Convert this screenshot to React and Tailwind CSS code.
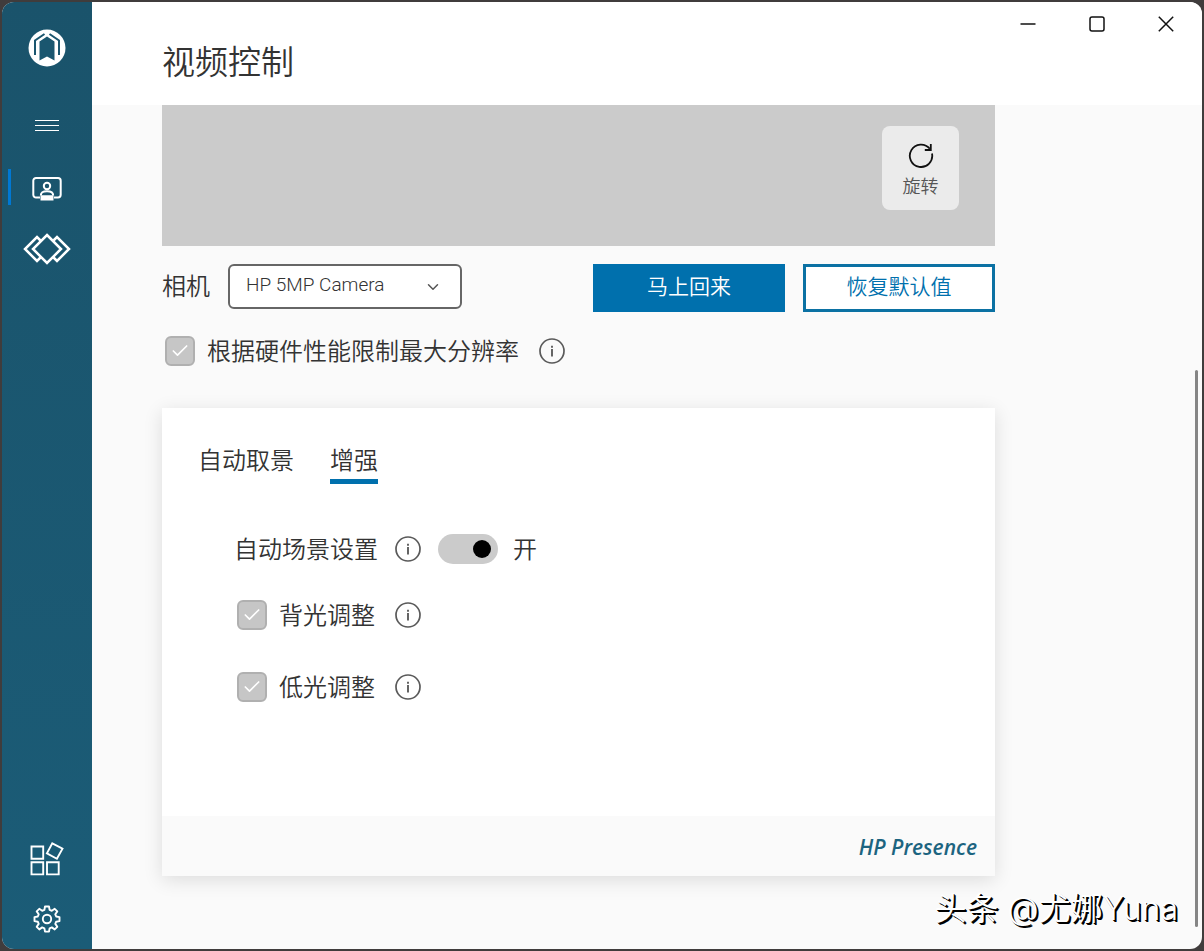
import { useState } from "react";
import { FiCheck, FiChevronDown } from "react-icons/fi";

function LogoIcon() {
  return (
    <svg width="38" height="38" viewBox="0 0 38 38" fill="none">
      <circle cx="19" cy="19" r="18.5" fill="#fff" />
      <path d="M11.500 31.500V12.500L19 7.500l7.500 5v19L19 27.500z" fill="#1a566f" />
      <path d="M16.500 5 7 11.500V26M21.500 5 31 11.500V26" stroke="#1a566f" strokeWidth="2" />
    </svg>
  );
}

function MenuIcon() {
  return (
    <svg width="24" height="12" viewBox="0 0 24 12" stroke="#fff">
      <path d="M0 .5h24M0 5.5h24M0 10.5h24" />
    </svg>
  );
}

function VideoIcon() {
  return (
    <svg width="30" height="24" viewBox="0 0 30 24" fill="none" stroke="#fff" strokeWidth="2">
      <path d="M8 20.500H4A2.700 2.700 0 0 1 1.300 17.800V3.700A2.700 2.700 0 0 1 4 1h22a2.700 2.700 0 0 1 2.700 2.700v14.100a2.700 2.700 0 0 1-2.700 2.700h-4" />
      <circle cx="15" cy="9" r="3.200" />
      <path d="M8.800 18.500c0-3 2-4.300 6.200-4.300s6.200 1.300 6.200 4.300" />
      <path d="M8.500 18.200h13v5.300h-13z" fill="#fff" stroke="none" />
    </svg>
  );
}

function DiamondsIcon() {
  return (
    <svg width="48" height="32" viewBox="0 0 48 32" fill="none" stroke="#fff" strokeWidth="2.500">
      <path d="M24 2 38 16 24 30 10 16z" />
      <path d="m18 8-4-4L2 16l12 12 4-4M30 8l4-4 12 12-12 12-4-4" />
    </svg>
  );
}

function AppsIcon() {
  return (
    <svg width="34" height="34" viewBox="0 0 34 34" fill="none" stroke="#fff" strokeWidth="1.900">
      <path d="M1.500 4.500h11.700v12.200H1.500zM1.500 20.200h11.700v12.200H1.500zM17 20.200h11.700v12.200H17z" />
      <path d="m22.300 1.300 10.200 5.400-5.600 10.100-10-5.400z" />
    </svg>
  );
}

function GearIcon() {
  return (
    <svg width="28" height="28" viewBox="0 0 28 28" fill="none" stroke="#fff" strokeWidth="1.900" strokeLinejoin="round">
      <path d="M12 1.500h4l.6 3.400 2.200.9 2.900-2 2.600 2.600-2 2.900.9 2.200 3.300.6v4l-3.300.6-.9 2.200 2 2.900-2.600 2.600-2.900-2-2.200.9-.6 3.300h-4l-.6-3.300-2.200-.9-2.900 2-2.600-2.600 2-2.900-.9-2.200-3.300-.6v-4l3.300-.6.9-2.200-2-2.900 2.600-2.600 2.900 2 2.200-.9z" />
      <circle cx="14" cy="14" r="4.200" />
    </svg>
  );
}

function RotateIcon() {
  return (
    <svg width="26" height="26" viewBox="0 0 26 26" fill="none" stroke="#111" strokeWidth="1.800">
      <path d="M24 10.500A11.200 11.200 0 1 1 21.800 5.800" />
      <path d="M22.800 1v6h-6" />
    </svg>
  );
}

function InfoButton({ label }) {
  return (
    <button type="button" aria-label={label} className="shrink-0">
      <svg width="26" height="26" viewBox="0 0 26 26" fill="none">
        <circle cx="13" cy="13" r="12" stroke="#5a5a5a" strokeWidth="1.700" />
        <path d="M13 11v7.500M13 7.800v1.900" stroke="#4a4a4a" strokeWidth="1.700" />
      </svg>
    </button>
  );
}

function Checkbox({ id, label }) {
  const [checked, setChecked] = useState(true);
  return (
    <div className="flex items-center gap-3 text-2xl leading-7">
      <span className="grid size-[30px] place-items-center">
        <input
          type="checkbox"
          id={id}
          checked={checked}
          onChange={(e) => setChecked(e.target.checked)}
          className="col-start-1 row-start-1 size-[30px] appearance-none rounded-md border-2 border-[#b0b0b0] bg-[#c6c6c6]"
        />
        {checked && <FiCheck className="pointer-events-none col-start-1 row-start-1 size-5 text-white" />}
      </span>
      <label htmlFor={id} className="pb-0.5">
        {label}
      </label>
    </div>
  );
}

function Sidebar() {
  const item = "flex h-[60px] w-full items-center justify-center";
  return (
    <nav className="flex w-[90px] shrink-0 flex-col bg-linear-to-b from-[#1a536b] to-[#1b5c77]">
      <div className="flex h-[92px] items-center justify-center">
        <LogoIcon />
      </div>
      <button type="button" aria-label="菜单" className="mb-px flex h-16 w-full items-center justify-center">
        <MenuIcon />
      </button>
      <button type="button" aria-label="视频控制" className={`${item} relative`}>
        <span className="absolute top-2.5 left-1.5 h-9 w-[3px] bg-[#0078d4]" />
        <VideoIcon />
      </button>
      <button type="button" aria-label="Presence" className={item}>
        <DiamondsIcon />
      </button>
      <button type="button" aria-label="应用" className={`${item} mt-auto`}>
        <AppsIcon />
      </button>
      <button type="button" aria-label="设置" className={item}>
        <GearIcon />
      </button>
    </nav>
  );
}

function WindowControls() {
  const button = "flex h-11 w-[69px] items-center justify-center";
  return (
    <div className="flex pr-0.5">
      <button type="button" aria-label="最小化" className={button}>
        <svg width="16" height="16" stroke="#111" strokeWidth="1.500">
          <path d="M.5 8h15" />
        </svg>
      </button>
      <button type="button" aria-label="最大化" className={button}>
        <svg width="16" height="16" fill="none" stroke="#111" strokeWidth="1.500">
          <rect x="1" y="1" width="14" height="14" rx="2" />
        </svg>
      </button>
      <button type="button" aria-label="关闭" className={button}>
        <svg width="16" height="16" stroke="#111" strokeWidth="1.500">
          <path d="m.8.8 14.400 14.400M15.200.8.8 15.200" />
        </svg>
      </button>
    </div>
  );
}

export default function App() {
  const [tab, setTab] = useState("enhance");
  const [auto, setAuto] = useState(true);
  const tabs = [
    ["framing", "自动取景"],
    ["enhance", "增强"],
  ];

  return (
    <div className="flex min-h-screen bg-[#403c3c] p-0.5 font-['Noto_Sans_CJK_SC',sans-serif] font-[350] text-[#333]">
      <div className="relative flex flex-1 overflow-hidden rounded-xl bg-[#fafafa]">
        <Sidebar />
        <div className="flex min-w-0 flex-1 flex-col">
          <header className="flex h-[103px] justify-between bg-white pl-[70px]">
            <h1 className="self-center pt-3 text-[33px] leading-10 font-[350]">视频控制</h1>
            <WindowControls />
          </header>

          <main className="pr-[207px] pb-[73px] pl-[70px]">
            <div className="flex h-[141px] items-start justify-end bg-[#cbcbcb] px-9 py-[21px]">
              <button type="button" className="flex h-[84px] w-[77px] flex-col items-center justify-center gap-1 rounded-lg bg-[#ebebeb] pt-1 text-lg leading-6 text-[#555]">
                <RotateIcon />
                旋转
              </button>
            </div>

            <div className="mt-[18px] flex items-start gap-[18px]">
              <label htmlFor="camera" className="text-2xl leading-[42px]">
                相机
              </label>
              <div className="relative">
                <select id="camera" className="h-[45px] w-[234px] appearance-none rounded-md border-2 border-[#666] bg-white px-4 pb-0.5 font-['Roboto',sans-serif] text-[19px] font-light text-[#333]">
                  <option>HP 5MP Camera</option>
                </select>
                <FiChevronDown className="pointer-events-none absolute top-[14px] right-5 size-[18px] text-[#555]" />
              </div>
              <button type="button" className="ml-auto h-12 w-48 bg-[#0070ad] pb-1 text-[21px] text-white">
                马上回来
              </button>
              <button type="button" className="h-12 w-48 border-3 border-[#0b71a3] bg-white pb-1 text-[21px] text-[#0070ad]">
                恢复默认值
              </button>
            </div>

            <div className="mt-6 flex items-center gap-5 pl-[3px]">
              <Checkbox id="limit" label="根据硬件性能限制最大分辨率" />
              <InfoButton label="分辨率说明" />
            </div>

            <section className="mt-[42px] bg-white shadow-[0_4px_18px_rgba(0,0,0,0.12)]">
              <div className="h-[408px] px-9 pt-8">
                <div role="tablist" className="flex gap-9">
                  {tabs.map(([key, name]) => (
                    <button
                      key={key}
                      type="button"
                      role="tab"
                      aria-selected={tab === key}
                      onClick={() => setTab(key)}
                      className={`h-11 border-b-5 pb-0.5 text-2xl ${tab === key ? "border-[#0070ad]" : "border-transparent"}`}
                    >
                      {name}
                    </button>
                  ))}
                </div>

                <div className="mt-[50px] flex items-center pl-9 text-2xl leading-7">
                  <label htmlFor="auto-scene" className="mr-[17px] pb-0.5">
                    自动场景设置
                  </label>
                  <InfoButton label="自动场景说明" />
                  <input
                    type="checkbox"
                    role="switch"
                    id="auto-scene"
                    checked={auto}
                    onChange={(e) => setAuto(e.target.checked)}
                    className="mr-[15px] ml-[17px] flex h-[30px] w-[60px] appearance-none items-center rounded-full bg-[#cbcbcb] px-[7px] before:size-[18px] before:rounded-full before:bg-black checked:justify-end"
                  />
                  <span className="pb-0.5">{auto ? "开" : "关"}</span>
                </div>
                <div className="mt-9 flex items-center gap-5 pl-[39px]">
                  <Checkbox id="backlight" label="背光调整" />
                  <InfoButton label="背光说明" />
                </div>
                <div className="mt-[42px] flex items-center gap-5 pl-[39px]">
                  <Checkbox id="lowlight" label="低光调整" />
                  <InfoButton label="低光说明" />
                </div>
              </div>
              <footer className="flex h-[60px] items-center justify-end bg-[#fafafa] px-[18px] pt-1 font-['Open_Sans',sans-serif] text-[21px] font-semibold text-[#1c6480] italic">HP Presence</footer>
            </section>
          </main>
        </div>

        <div className="absolute top-[368px] right-1 bottom-[22px] w-[3px] rounded-full bg-[#858585]" />
        <p className="absolute right-6 bottom-5 font-['Inter','Noto_Sans_CJK_SC',sans-serif] text-[32px] leading-10 text-white [text-shadow:1px_1px_0_#000,2px_2px_0_#000]">头条 @尤娜Yuna</p>
      </div>
    </div>
  );
}
